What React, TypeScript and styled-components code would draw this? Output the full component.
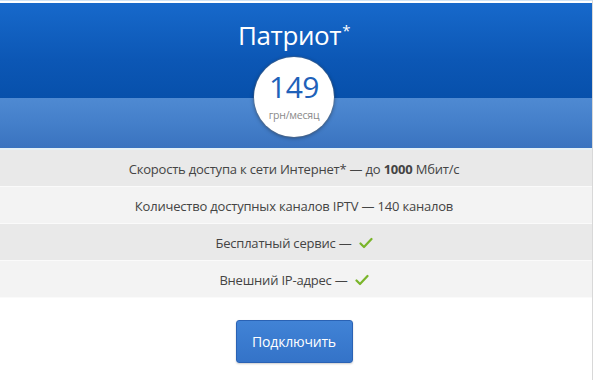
import React from 'react';
import styled, { createGlobalStyle } from 'styled-components';

const GlobalStyle = createGlobalStyle`
  html, body {
    margin: 0;
    padding: 0;
    background: #ffffff;
    font-family: 'Open Sans', 'Noto Sans', sans-serif;
  }
`;

// card is a bit cropped on the left in the shot, so it sits 4px outside
const Card = styled.div`
  width: 596px;
  margin-left: -4px;
  border-right: 1px solid #d8d8d8;
  padding-top: 2px;
  border-top: 1px solid #cfe3f5;
  background: #ffffff;
`;

const Header = styled.div`
  position: relative;
  display: flex;
  flex-direction: column;
`;

const TopBand = styled.div`
  height: 95px;
  background: linear-gradient(to bottom, #1769cb 0%, #0c57b5 60%, #0750ab 100%);
  display: flex;
  justify-content: center;
`;

const Title = styled.h1`
  margin: 14px 0 0;
  font-size: 26px;
  font-weight: 400;
  color: #ffffff;
  letter-spacing: -0.4px;
  line-height: 36px;
`;

const Star = styled.span`
  font-size: 15px;
  position: relative;
  top: -9px;
  margin-left: 1px;
`;

const BottomBand = styled.div`
  height: 50px;
  background: linear-gradient(to bottom, #4f8ad2 0%, #447fca 50%, #3a73bf 100%);
  border-bottom: 2px solid #e4f0f6;
`;

const PriceBadge = styled.div`
  position: absolute;
  left: 258px;
  top: 54px;
  width: 80px;
  height: 80px;
  border-radius: 50%;
  background: #ffffff;
  box-shadow: 0 0 0 1px rgba(120, 120, 120, 0.3), 0 1px 4px rgba(0, 0, 0, 0.4);
  display: flex;
  flex-direction: column;
  align-items: center;
`;

const Price = styled.div`
  margin-top: 13px;
  font-size: 30px;
  line-height: 34px;
  color: #2061b9;
  letter-spacing: -0.5px;
`;

const Period = styled.div`
  margin-top: 4px;
  font-size: 10.5px;
  color: #8a8a8a;
  letter-spacing: -0.2px;
`;

const Features = styled.ul`
  list-style: none;
  margin: 0;
  padding: 0;
`;

const Feature = styled.li<{ $alt: boolean }>`
  height: 37px;
  padding-top: 1px;
  box-sizing: border-box;
  display: flex;
  align-items: center;
  justify-content: center;
  gap: 7px;
  background: ${(p) => (p.$alt ? '#f3f3f3' : '#e9e9e9')};
  border-bottom: 1px solid #fafafa;
  font-size: 13px;
  color: #444444;
  letter-spacing: -0.2px;
`;

const Footer = styled.div`
  display: flex;
  justify-content: center;
  padding: 22px 0 17px;
`;

const ConnectButton = styled.button`
  width: 117px;
  height: 43px;
  border: 1px solid #2a62b4;
  border-radius: 3px;
  background: linear-gradient(to bottom, #4183d6 0%, #3473c8 100%);
  color: #ffffff;
  font-family: inherit;
  font-size: 14px;
  letter-spacing: -0.2px;
  box-shadow: 0 1px 2px rgba(0, 0, 0, 0.2);
`;

const Check = () => (
  <svg width="14" height="12" viewBox="0 0 14 12">
    <path d="M1.5 6.5 L5 10 L12.5 2" fill="none" stroke="#7ab52a" strokeWidth="2.2" strokeLinecap="round" strokeLinejoin="round" />
  </svg>
);

const features: { text: React.ReactNode; check?: boolean }[] = [
  { text: <>Скорость доступа к сети Интернет* — до <b>1000</b> Мбит/с</> },
  { text: 'Количество доступных каналов IPTV — 140 каналов' },
  { text: 'Бесплатный сервис —', check: true },
  { text: 'Внешний IP-адрес —', check: true },
];

export default function App() {
  return (
    <>
      <GlobalStyle />
      <Card>
        <Header>
          <TopBand>
            <Title>
              Патриот<Star>*</Star>
            </Title>
          </TopBand>
          <BottomBand />
          <PriceBadge>
            <Price>149</Price>
            <Period>грн/месяц</Period>
          </PriceBadge>
        </Header>
        <Features>
          {features.map((f, i) => (
            <Feature key={i} $alt={i % 2 === 1}>
              <span>{f.text}</span>
              {f.check && <Check />}
            </Feature>
          ))}
        </Features>
        <Footer>
          <ConnectButton>Подключить</ConnectButton>
        </Footer>
      </Card>
    </>
  );
}
